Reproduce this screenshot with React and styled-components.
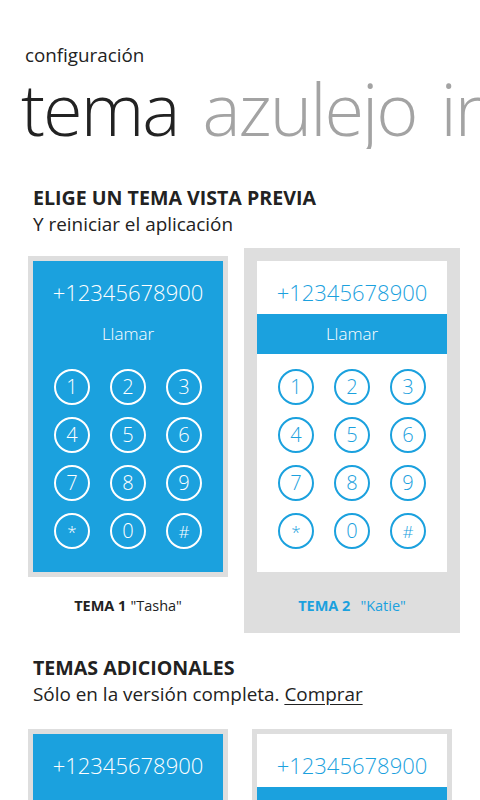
import styled, { createGlobalStyle, css } from "styled-components";

const BLUE = "#1ba1de";
const GRAY = "#dedede";

const GlobalStyle = createGlobalStyle`
  html, body {
    margin: 0;
    padding: 0;
    background: #fff;
    overflow: hidden;
  }
  body {
    font-family: "Open Sans", "Noto Sans", sans-serif;
    color: #222;
  }
`;

const Page = styled.div`
  width: 480px;
  height: 800px;
  overflow: hidden;
  background: #fff;
`;

const AppTitle = styled.div`
  padding: 43px 0 0 25px;
  font-size: 18.8px;
  line-height: 24px;
  color: #222;
`;

const Pivot = styled.div`
  display: flex;
  gap: 24px;
  white-space: nowrap;
  padding-left: 21px;
  font-size: 72px;
  line-height: 82px;
  font-weight: 300;
  letter-spacing: -2px;
  overflow: hidden;
`;

const PivotItem = styled.span`
  color: ${(p) => (p.$active ? "#222" : "#a3a3a3")};
`;

const Section = styled.section`
  padding: 0 20px;
`;

const SectionHead = styled.div`
  padding: ${(p) => p.$top}px 13px 0;
`;

const SectionTitle = styled.h2`
  margin: 0;
  font-size: 19.6px;
  line-height: 26px;
  font-weight: 700;
`;

const SectionText = styled.p`
  margin: 0;
  font-size: 18.9px;
  line-height: 26px;
  font-weight: 400;
`;

const BuyLink = styled.span`
  text-decoration: underline;
  text-underline-offset: 3px;
`;

const Tiles = styled.div`
  display: flex;
  gap: 8px;
  margin-top: ${(p) => p.$top}px;
`;

const Tile = styled.div`
  width: 200px;
  padding: 8px 8px 0;
  background: ${(p) => (p.$selected ? GRAY : "transparent")};
`;

const Phone = styled.div`
  width: 190px;
  height: 311px;
  border: 5px solid ${GRAY};
  background: ${(p) => (p.$dark ? BLUE : "#fff")};
  color: ${(p) => (p.$dark ? "#fff" : BLUE)};
  display: flex;
  flex-direction: column;
  align-items: stretch;
`;

const Number = styled.div`
  padding-top: 16px;
  height: 37px;
  line-height: 30px;
  font-size: 22px;
  font-weight: 300;
  text-align: center;
`;

const CallBar = styled.div`
  height: 40px;
  line-height: 40px;
  text-align: center;
  font-size: 17px;
  font-weight: 300;
  color: #fff;
  background: ${(p) => (p.$filled ? BLUE : "transparent")};
`;

const Keypad = styled.div`
  margin-top: 15px;
  display: grid;
  grid-template-columns: repeat(3, 36px);
  column-gap: 20px;
  row-gap: 12px;
  justify-content: center;
`;

const Key = styled.div`
  width: 32px;
  height: 32px;
  border: 2px solid currentColor;
  border-radius: 50%;
  display: flex;
  align-items: center;
  justify-content: center;
  font-size: 20px;
  font-weight: 300;
  line-height: 1;
  ${(p) =>
    p.$small &&
    css`
      font-size: 17px;
    `}
`;

const Label = styled.div`
  height: 56px;
  display: flex;
  align-items: center;
  justify-content: center;
  font-size: 14.5px;
  color: ${(p) => (p.$selected ? BLUE : "#222")};
  b {
    font-weight: 700;
    margin-right: ${(p) => (p.$selected ? 10 : 4)}px;
  }
`;

const keys = ["1", "2", "3", "4", "5", "6", "7", "8", "9", "*", "0", "#"];

function PhonePreview({ dark }) {
  return (
    <Phone $dark={dark}>
      <Number>+12345678900</Number>
      <CallBar $filled={!dark}>Llamar</CallBar>
      <Keypad>
        {keys.map((k) => (
          <Key key={k} $small={k === "*" || k === "#"}>
            {k}
          </Key>
        ))}
      </Keypad>
    </Phone>
  );
}

function ThemeTile({ dark, selected, num, name }) {
  return (
    <Tile $selected={selected}>
      <PhonePreview dark={dark} />
      {num && (
        <Label $selected={selected}>
          <b>TEMA {num}</b>
          <span>"{name}"</span>
        </Label>
      )}
    </Tile>
  );
}

export default function App() {
  return (
    <Page>
      <GlobalStyle />
      <AppTitle>configuración</AppTitle>
      <Pivot>
        <PivotItem $active>tema</PivotItem>
        <PivotItem>azulejo</PivotItem>
        <PivotItem>información</PivotItem>
      </Pivot>
      <Section>
        <SectionHead $top={36}>
          <SectionTitle>ELIGE UN TEMA VISTA PREVIA</SectionTitle>
          <SectionText>Y reiniciar el aplicación</SectionText>
        </SectionHead>
        <Tiles $top={11}>
          <ThemeTile dark num="1" name="Tasha" />
          <ThemeTile selected num="2" name="Katie" />
        </Tiles>
        <SectionHead $top={22}>
          <SectionTitle>TEMAS ADICIONALES</SectionTitle>
          <SectionText>
            Sólo en la versión completa. <BuyLink>Comprar</BuyLink>
          </SectionText>
        </SectionHead>
        <Tiles $top={14}>
          <ThemeTile dark />
          <ThemeTile />
        </Tiles>
      </Section>
    </Page>
  );
}
